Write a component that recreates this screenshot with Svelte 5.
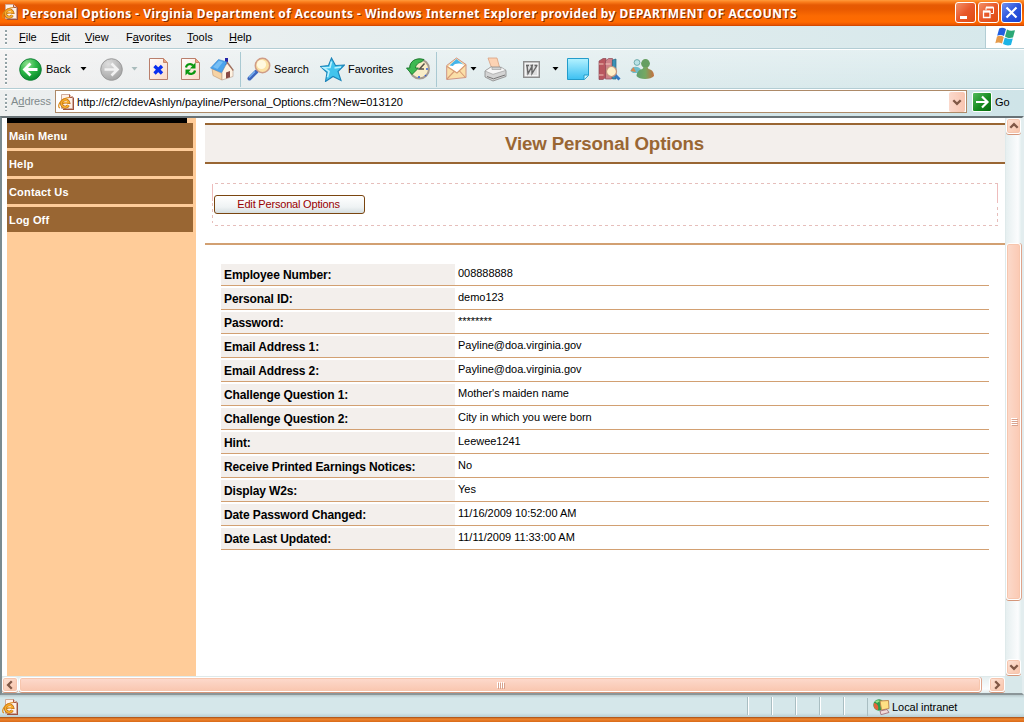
<script>
  const menus = [['', 'F', 'ile'], ['', 'E', 'dit'], ['', 'V', 'iew'], ['F', 'a', 'vorites'], ['', 'T', 'ools'], ['', 'H', 'elp']];
  const nav = ['Main Menu', 'Help', 'Contact Us', 'Log Off'];
  const rows = [
    ['Employee Number:', '008888888'],
    ['Personal ID:', 'demo123'],
    ['Password:', '********'],
    ['Email Address 1:', 'Payline@doa.virginia.gov'],
    ['Email Address 2:', 'Payline@doa.virginia.gov'],
    ['Challenge Question 1:', "Mother's maiden name"],
    ['Challenge Question 2:', 'City in which you were born'],
    ['Hint:', 'Leewee1241'],
    ['Receive Printed Earnings Notices:', 'No'],
    ['Display W2s:', 'Yes'],
    ['Date Password Changed:', '11/16/2009 10:52:00 AM'],
    ['Date Last Updated:', '11/11/2009 11:33:00 AM']
  ];
</script>

{#snippet page()}
  <svg width="16" height="16" viewBox="0 0 16 16">
    <path d="M5 2h9l2 2v12H5z" fill="#a0523f" />
    <path d="M3.500.5h8l3 3v11h-11z" fill="#fff1e8" stroke="#d0aa9a" />
    <path d="M11.500.5v3h3" fill="#f0c7b2" stroke="#a65a48" />
    <path d="M10.400 11.200A3.700 3.700 0 1 1 10.700 8.500H5" fill="none" stroke="#a85c0c" stroke-width="2.900" />
    <path d="M10.400 11.200A3.700 3.700 0 1 1 10.700 8.500H5" fill="none" stroke="#f7ab2c" stroke-width="1.900" />
    <path d="M6.300 7.600h2.600M6.300 10h3" stroke="#fff1e8" stroke-width=".8" />
    <path d="M2 14C-1.500 13 2 4 11.500 3.500" fill="none" stroke="#dc8b18" stroke-width="1.200" />
  </svg>
{/snippet}

{#snippet arrow(color)}
  <svg width="7" height="4" viewBox="0 0 7 4"><path d="M.5 0h6L3.500 3.500z" fill={color} /></svg>
{/snippet}

{#snippet chevron(turn)}
  <svg width="10" height="10" viewBox="0 0 10 10"><path d="M1.300 3.200 5 6.900l3.700-3.700" fill="none" stroke="#805846" stroke-width="2.300" transform="rotate({turn} 5 5)" /></svg>
{/snippet}

<div class="window">
  <header class="title">
    {@render page()}
    <span class="caption">Personal Options - Virginia Department of Accounts - Windows Internet Explorer provided by DEPARTMENT OF ACCOUNTS</span>
    <div class="wbtns">
      <span class="wbtn"><svg width="19" height="19" viewBox="0 0 19 19"><path d="M4 13h7v3H4z" fill="#fff" /></svg></span>
      <span class="wbtn"><svg width="19" height="19" viewBox="0 0 19 19"><path d="M7 7V4.500h7.500v6H12" fill="none" stroke="#fff" /><path d="M7 4.500h7.500M4 8.500h7" stroke="#fff" stroke-width="2" /><path d="M4.500 8.500h6.500v6H4.500z" fill="none" stroke="#fff" stroke-width="1.300" /></svg></span>
      <span class="wbtn blue"><svg width="19" height="19" viewBox="0 0 19 19"><path d="m4.500 4.500 10 10m0-10-10 10" stroke="#fff" stroke-width="2.200" /></svg></span>
    </div>
  </header>

  <nav class="menubar">
    <i class="grip"></i>
    {#each menus as m}<span>{m[0]}<u>{m[1]}</u>{m[2]}</span>{/each}
    <div class="flag">
      <svg width="21" height="19" viewBox="0 0 21 19">
        <path d="M4.200 1.500C6.500.2 8.500.5 11 2L9 9C6.800 7.700 4.500 7.500 2.200 8.700z" fill="#1f5fe0" />
        <path d="M12 2.500c2.500 1.400 4.700 1.400 8 .7L18 10.500c-3 .9-5.300.600-8-1z" fill="#2aa876" />
        <path d="M2 9.500c2.200-1.100 4.600-1 6.800.4L7 16.500C4.700 15.200 2.500 15 .3 16.200z" fill="#e59a4a" />
        <path d="M9.800 10.400c2.500 1.500 5 1.800 8 1L16 18c-3 .8-5.400.500-8-1z" fill="#1cb4e6" />
      </svg>
    </div>
  </nav>

  <div class="toolbar">
    <i class="grip"></i>
    <svg width="23" height="23" viewBox="0 0 23 23">
      <defs>
        <radialGradient id="gback" cx=".35" cy=".25" r=".8"><stop offset="0" stop-color="#8fe08f" /><stop offset=".5" stop-color="#2db848" /><stop offset="1" stop-color="#06872a" /></radialGradient>
        <radialGradient id="gfwd" cx=".35" cy=".25" r=".8"><stop offset="0" stop-color="#dedede" /><stop offset="1" stop-color="#a2a2a2" /></radialGradient>
      </defs>
      <circle cx="11.500" cy="11.500" r="10.800" fill="url(#gback)" stroke="#16803a" />
      <path d="M18.500 11.500H6M11.500 5.500l-6 6 6 6" fill="none" stroke="#fff" stroke-width="2.800" />
    </svg>
    <span>Back</span>
    {@render arrow('#000')}
    <svg width="23" height="23" viewBox="0 0 23 23">
      <circle cx="11.500" cy="11.500" r="10.800" fill="url(#gfwd)" stroke="#9b9b9b" />
      <path d="M4.500 11.500H17M11.500 5.500l6 6-6 6" fill="none" stroke="#f2f2f2" stroke-width="2.600" />
    </svg>
    {@render arrow('#a9bcbc')}
    <svg width="20" height="24" viewBox="0 0 20 24">
      <defs><linearGradient id="gpage" x2="1" y2="1"><stop offset="0" stop-color="#fff" /><stop offset="1" stop-color="#fbd9c5" /></linearGradient></defs>
      <path d="M.5 1.500h14l4 4v17H.5z" fill="url(#gpage)" stroke="#b97f6c" /><path d="M14.500 1.500v4h4" fill="#eaa380" stroke="#c98568" />
      <path d="m5.500 9 7.500 7.500m0-7.500-7.500 7.500" stroke="#0a30f0" stroke-width="3.300" />
    </svg>
    <svg width="20" height="24" viewBox="0 0 20 24">
      <path d="M.5 1.500h14l4 4v17H.5z" fill="url(#gpage)" stroke="#b97f6c" /><path d="M14.500 1.500v4h4" fill="#eaa380" stroke="#c98568" />
      <path d="M5 10.500C5.500 7 10 6 12 8.500" fill="none" stroke="#0b9810" stroke-width="2.200" /><path d="M14.500 5.500v6H9z" fill="#0b9810" />
      <path d="M14 13.500c-.5 3.500-5 4.500-7 2" fill="none" stroke="#0b9810" stroke-width="2.200" /><path d="M4.500 18.500v-6H10z" fill="#0b9810" />
    </svg>
    <svg width="24" height="24" viewBox="0 0 24 24">
      <path d="M15 1h3v7h-3z" fill="#2424a8" />
      <path d="m2 11.500 10 5V23L3 18.500z" fill="#f6d3a4" stroke="#c59d78" stroke-width=".7" />
      <path d="m12 15 5-9 6 7v6.500L12 23z" fill="#fff3e2" stroke="#bda494" stroke-width=".7" />
      <path d="m16 15.500 4-1.500v6.200l-4 1.400z" fill="#8a4b45" />
      <path d="M.5 11 8.500 2.500 17 5l-5.500 10.500z" fill="#4ba3ec" stroke="#3a86cc" stroke-width=".6" />
      <path d="m3 10 6-6.300 4 1.200-5.500 7z" fill="#8acbf8" opacity=".7" /><path d="m17 5 6.300 8.500" stroke="#a0705f" stroke-width="1.300" />
    </svg>
    <i class="sep"></i>
    <svg width="24" height="24" viewBox="0 0 24 24">
      <path d="m2.500 21.500 7-7" stroke="#3d66bd" stroke-width="4" stroke-linecap="round" /><path d="m2 20.500 6-6" stroke="#77b1f1" stroke-width="1.500" />
      <circle cx="15.500" cy="8.500" r="7.200" fill="#fbe1a4" stroke="#cf9c86" stroke-width="1.500" /><circle cx="14.500" cy="7.500" r="4.600" fill="#fff9e0" />
    </svg>
    <span>Search</span>
    <svg width="25" height="25" viewBox="0 0 25 25">
      <path d="m11.500 1 4 7.500 9-.5-6.500 6.500 3 9-8-4-7.500 5 1.500-9-6.500-6 8-1z" fill="#42c4ed" stroke="#1b83b8" stroke-width="1.100" />
      <path d="M11.500 4.500 10 10.500l-6.500.200L9 14.300l-1.500 6M21 10 14.500 11" stroke="#b8f1ff" stroke-width="1.600" fill="none" />
    </svg>
    <span>Favorites</span>
    <svg width="24" height="24" viewBox="0 0 24 24">
      <circle cx="13.500" cy="12" r="9.500" fill="#f9edc8" stroke="#a69b90" stroke-width="2" />
      <path d="m18.500 6.500-5 5.500h4.500" fill="none" stroke="#58534b" stroke-width="1.500" /><path d="M20 12h2M13 19v2m6-3 1 1" stroke="#2f60dd" stroke-width="1.600" />
      <path d="M18 2.500C9 0 3.500 5 3.800 11H.5l5.500 6.500L12.500 11H9.500c0-3 3-5.500 6-6z" fill="#3db951" stroke="#16762b" stroke-width=".9" />
    </svg>
    <i class="sep"></i>
    <svg width="21" height="24" viewBox="0 0 21 24">
      <path d="M.7 8.500 10.500 1l9.500 6.500v13L.7 22.500z" fill="#fbdfa8" stroke="#cf9484" />
      <path d="m2.500 9.500 8-7.500 8 6.500-7.500 7z" fill="#fff" /><path d="M3.500 8.500 10.500 2l7.500 6c-4-2-9-2-11 1z" fill="#45b4ea" />
      <path d="M1 9.500 11 16l9-8.500M1 22l7.500-8m11 6.500L13.500 14" fill="none" stroke="#d79b75" stroke-width="1.100" />
    </svg>
    {@render arrow('#000')}
    <svg width="24" height="25" viewBox="0 0 24 25">
      <path d="M4 1h9l3 11H8z" fill="#fdd3b4" stroke="#d8a182" stroke-width=".8" />
      <path d="m1 14 6-4h9l6 3.500v6L9 24l-8-4z" fill="#d4d4d4" stroke="#888" stroke-width=".8" />
      <path d="m1 14 8 3.300 13-4L17 10v2.500H8V10H7z" fill="#f7f7f7" stroke="#999" stroke-width=".6" />
      <path d="m3 19.500 6.500 2.300L21 18" fill="none" stroke="#777" />
    </svg>
    <svg width="17" height="17" viewBox="0 0 17 17">
      <path d="M.7.7h15.600v15.600H.7z" fill="#f4f4f4" stroke="#8d8d8d" stroke-width="1.400" /><path d="M3 3h11v11H3z" fill="#dedede" />
      <path d="m4 4.500 1 8 4-7v7l5-8M3 4.500h3m1.500 0H10m1.500 0h3" fill="none" stroke="#666" stroke-width="1.400" />
    </svg>
    {@render arrow('#000')}
    <svg width="22" height="22" viewBox="0 0 22 22">
      <defs><linearGradient id="gnote" x2="0" y2="1"><stop offset="0" stop-color="#b4f2ff" /><stop offset="1" stop-color="#3cc0f2" /></linearGradient></defs>
      <path d="M.5.5h21V17.500l-4 4H.5z" fill="url(#gnote)" stroke="#239ccb" /><path d="M17 21.500V17h4.500" fill="#d2f7ff" stroke="#239ccb" />
    </svg>
    <svg width="23" height="23" viewBox="0 0 23 23">
      <path d="m1 3 4-2.500h3V19l-3 2.500H1z" fill="#b9575f" stroke="#8c4958" stroke-width=".7" /><path d="m7.500 3 3-2.500h4L13.500 21h-6z" fill="#cf838a" stroke="#8c4958" stroke-width=".7" />
      <path d="M14.500 2 18 1v20h-3.500z" fill="#3a91b8" stroke="#28667f" stroke-width=".7" /><path d="M1 6h4.500m2 0h5M1 17h4.500" stroke="#f2c7ba" />
      <path d="m17 17 4.500 4.500" stroke="#3478c2" stroke-width="3" /><circle cx="13.500" cy="13.500" r="5" fill="#fff0c8" stroke="#c6957e" stroke-width="1.200" />
    </svg>
    <svg width="24" height="22" viewBox="0 0 24 22">
      <defs><linearGradient id="gman"><stop offset="0" stop-color="#5f9f6e" /><stop offset=".5" stop-color="#75a862" /><stop offset="1" stop-color="#c66f3f" /></linearGradient></defs>
      <circle cx="7" cy="4.500" r="2.900" fill="#b9e2e6" stroke="#5c9d9d" stroke-width=".8" /><path d="M.5 13C1 7.500 9 7.500 11 12l-2 3H3z" fill="#6ebdca" /><path d="m.5 13 3-4 2.500 5z" fill="#d98850" />
      <circle cx="15.500" cy="5.500" r="4.400" fill="#669f62" /><path d="M6.500 18C7 13 10 11.500 12.500 11l1-2h4l1 2c3 .5 5.500 2.500 5.500 7-3 4-15 4-17.500 0z" fill="url(#gman)" />
    </svg>
  </div>

  <div class="address">
    <i class="grip"></i>
    <span class="alabel">A<u>d</u>dress</span>
    <div class="field">
      {@render page()}
      <span class="url">http://cf2/cfdevAshlyn/payline/Personal_Options.cfm?New=013120</span>
      <span class="drop">{@render chevron(0)}</span>
    </div>
    <span class="go"><svg width="18" height="18" viewBox="0 0 18 18"><path d="M3 9h12M9 3.500 14.500 9 9 14.500" fill="none" stroke="#fff" stroke-width="2.200" /></svg></span>
    <span class="golabel">Go</span>
  </div>

  <div class="view">
    <aside>
      <div class="cap"></div>
      {#each nav as n}<a href="#top">{n}</a>{/each}
    </aside>
    <main>
      <h1>View Personal Options</h1>
      <div class="actions"><button>Edit Personal Options</button></div>
      <div class="rule"></div>
      <dl>
        {#each rows as r}
          <div class="row"><dt>{r[0]}</dt><dd>{r[1]}</dd></div>
        {/each}
      </dl>
    </main>
    <div class="vscroll">
      <span class="sbtn">{@render chevron(180)}</span>
      <span class="vthumb"><i></i><i></i><i></i><i></i></span>
      <span class="sbtn end">{@render chevron(0)}</span>
    </div>
    <div class="hscroll">
      <span class="sbtn">{@render chevron(90)}</span>
      <span class="hthumb"><i></i><i></i><i></i><i></i></span>
      <span class="sbtn end">{@render chevron(-90)}</span>
    </div>
  </div>

  <footer>
    <span class="sicon">{@render page()}</span>
    <i class="cell"></i><i class="cell"></i><i class="cell"></i><i class="cell"></i><i class="cell"></i>
    <span class="zone">
      <svg width="17" height="16" viewBox="0 0 17 16">
        <circle cx="6" cy="6" r="5.700" fill="#2c9a4a" /><path d="M1 4c3 0 5 3 4 7-3 0-5-3-4-7z" fill="#e2633a" /><path d="M2 2.500C4 1 6 1 7 2L4 4z" fill="#9ae28c" />
        <path d="m7 2 8.500-.5.500 8-7.500 1.500z" fill="#ffe083" stroke="#c08a50" /><path d="m7 12 7-1.500 2 3-8 2.200z" fill="#f2dada" stroke="#9a6370" stroke-width=".8" />
      </svg>
      Local intranet
    </span>
  </footer>
</div>

<style>
  :global(body) { margin: 0; }
  .window { width: 1024px; height: 722px; overflow: hidden; display: flex; flex-direction: column; background: #d5e7ea; font: 11px/13px "Liberation Sans", Arial, sans-serif; color: #000; box-sizing: border-box; }
  .window :global(*) { box-sizing: border-box; }
  svg { display: block; flex: none; }
  u { text-decoration: underline; text-underline-offset: 1px; text-decoration-skip-ink: none; }
  .title { height: 26px; flex: none; display: flex; align-items: center; padding: 0 2px; background: linear-gradient(#ff9b3c 0, #fb7e1c 2px, #e65a04 5px, #e85900 9px, #fb6a02 16px, #ff6a00 22px, #e85300 25px, #c04000 26px); }
  .caption { margin-left: 4px; padding-top: 1px; flex: 1; white-space: nowrap; color: #fff; font: bold 12px/16px "Noto Sans", sans-serif; letter-spacing: .46px; text-shadow: 1px 1px 0 #8a2c08; }
  .title > svg { margin-top: -2px; }
  .wbtns { display: flex; gap: 2px; margin-top: -1px; }
  .wbtn { width: 21px; height: 21px; border: 1px solid #fff; border-radius: 3px; background: linear-gradient(135deg, #f39168, #e8582a 50%, #e04c10); }
  .blue { background: linear-gradient(135deg, #7592ee, #2c55dd 50%, #1b43cf); }
  .menubar { height: 24px; flex: none; display: grid; grid-template-columns: 14px 32px 34px 41px 61px 42px 1fr 39px; padding-left: 5px; background: linear-gradient(90deg, #f3f2f2, #e6eeef 35%, #d6e8eb); border-bottom: 1px solid #fff; box-shadow: inset 0 -1px #b3cdd4; line-height: 22px; }
  .flag { background: #fff; border-left: 1px solid #b3cdd4; padding: 1px 0 0 9px; height: 22px; }
  .grip { width: 2px; background: repeating-linear-gradient(#93a2a6 0 2px, #fff 2px 3px, transparent 3px 4px); }
  .menubar .grip { height: 15px; margin-top: 4px; }
  .toolbar { height: 40px; flex: none; display: grid; align-items: center; padding: 0 0 1px 5px; grid-template-columns: 14px 27px 34px 20px 31px 18px 32px 29px 30px 7px 27px 46px 28px 58px 30px 10px 24px 14px 39px 29px 15px 31px 32px 24px; background: linear-gradient(#ffffff50, #ffffff00), linear-gradient(90deg, #f1efef, #e3edee 35%, #d5e8eb); border-bottom: 1px solid #fff; box-shadow: inset 0 -1px #b3cdd4; }
  .toolbar span { padding-top: 1px; }
  .toolbar .grip { height: 31px; }
  .sep { width: 1px; height: 35px; background: #a9c9d2; }
  .address { height: 26px; flex: none; display: flex; align-items: flex-start; padding-left: 5px; background: linear-gradient(90deg, #edefef, #dce9eb 35%, #cfe4e8); }
  .address .grip { height: 17px; margin-top: 4px; }
  .alabel { width: 49px; margin-left: -1px; padding: 5px 0 0 5px; color: #808a8c; letter-spacing: -.05px; }
  .field { width: 912px; height: 23px; border: 1px solid #ad8a68; background: #fff; display: flex; align-items: center; padding: 0 1px 0 2px; }
  .url { flex: 1; margin-left: 3px; padding-top: 1px; letter-spacing: .015px; }
  .drop { width: 16px; height: 20px; border-radius: 2px; background: linear-gradient(90deg, #fbd9cc, #f8c5b0); display: flex; align-items: center; justify-content: center; }
  .go { margin: 2px 0 0 5px; width: 20px; height: 20px; border: 1px solid #fff; border-radius: 2px; background: linear-gradient(135deg, #54ba5c, #178b20 55%, #056b0c); }
  .golabel { margin: 6px 0 0 3px; }
  .view { height: 579px; flex: none; display: grid; grid-template-rows: 558px 17px; grid-template-columns: 194px 809px 17px; background: #d8e8ea; border: 2px solid #6b7477; border-top-color: #687276; border-right: 2px solid #e3edef; border-bottom: 2px solid #8b9699; border-left: 2px solid #7b8b90; }
  aside { background: linear-gradient(#fc9, #fc9) 5px 0 / 189px 100% no-repeat #fff; padding: 0 3px 0 5px; }
  .cap { width: 180px; height: 5px; background: #000; }
  aside a { display: block; height: 25px; margin-bottom: 3px; padding: 0 2px; background: #963; color: #fff; text-decoration: none; font-weight: bold; line-height: 26px; letter-spacing: .17px; }
  main { background: #fff; padding: 5px 0 0 9px; }
  h1 { margin: 0; height: 41px; border: solid #963; border-width: 2px 0; background: #f3efec; color: #963; text-align: center; font: bold 18.67px/38px "Liberation Sans", Arial, sans-serif; letter-spacing: -.13px; padding-right: 1px; }
  .actions { margin: 19px 7px 0; height: 43px; padding: 12px 2px;
    background:
      repeating-linear-gradient(90deg, #e6bebb 0 3px, transparent 3px 6px) 3px 0 / 783px 1px no-repeat,
      repeating-linear-gradient(90deg, #e6bebb 0 3px, transparent 3px 6px) 3px 42px / 783px 1px no-repeat,
      linear-gradient(#eebcbc, #eebcbc) 0 1px / 1px 17px no-repeat,
      repeating-linear-gradient(#e6bebb 0 3px, transparent 3px 6px) 0 20px / 1px 20px no-repeat,
      linear-gradient(#eebcbc, #eebcbc) 785px 0 / 1px 20px no-repeat,
      repeating-linear-gradient(#e6bebb 0 3px, transparent 3px 6px) 785px 24px / 1px 16px no-repeat; }
  button { display: block; width: 151px; height: 19px; margin: 0; padding: 0 2px 0 0; border: 1px solid #7a4510; border-radius: 3px; background: linear-gradient(#fff, #eff3f4 65%, #d5dee0); color: #900; font: 11px/15px "Liberation Sans", Arial, sans-serif; letter-spacing: -.19px; }
  .rule { height: 2px; margin: 17px 0 19px; background: #d2a072; }
  dl { margin: 0 16px; display: flex; flex-direction: column; gap: 2px; }
  .row { height: 22px; display: flex; border-bottom: 1px solid #d2a072; }
  dt { width: 234px; padding-left: 3px; background: #f3efec; font: bold 12px/22px "Liberation Sans", Arial, sans-serif; letter-spacing: -.12px; }
  dd { margin: 0; padding-left: 3px; line-height: 19px; letter-spacing: -.03px; }
  .vscroll { background: linear-gradient(90deg, #e6eff0, #fbfcfd 75%, #dfeced); border-left: 1px solid #dfeaeb; display: flex; flex-direction: column; align-items: flex-start; }
  .sbtn { width: 15px; height: 16px; flex: none; border: 1px solid #fff; border-radius: 3px; background: linear-gradient(135deg, #fde4d8, #f8c3a8); box-shadow: inset 0 0 0 1px #f5c5ae, 0 1px #d5977b; display: flex; align-items: center; justify-content: center; }
  .vthumb { margin-top: 109px; width: 15px; height: 357px; border: 1px solid #fff; border-radius: 3px; background: linear-gradient(90deg, #fbdacb, #fbc9b3); box-shadow: inset 0 0 0 1px #f7c6ae, 0 1px #d5977b, 1px 0 #dfa48b; display: flex; flex-direction: column; gap: 1px; align-items: center; justify-content: center; }
  .vthumb i { width: 6px; height: 1px; background: #fff; box-shadow: 1px 1px #d8a28d; }
  .vscroll .end { margin-top: auto; margin-bottom: 1px; }
  .hscroll { grid-column: 1 / 3; background: linear-gradient(#e6eff0, #fbfcfd 75%, #dfeced); border-top: 1px solid #dfeaeb; display: flex; }
  .hthumb { margin-left: 1px; width: 962px; height: 15px; border: 1px solid #fff; border-radius: 3px; background: linear-gradient(#fddacd, #f9c6af); box-shadow: inset 0 0 0 1px #f7c6ae, 0 1px #d5977b, 1px 0 #dfa48b; display: flex; gap: 1px; align-items: center; justify-content: center; }
  .hthumb i { width: 1px; height: 6px; background: #fff; box-shadow: 1px 1px #d8a28d; }
  .hscroll .end { margin-left: auto; }
  .hscroll .sbtn { width: 16px; height: 15px; }
  footer { flex: 1; display: flex; background: linear-gradient(#b8c9cc 0, #d5e7ea 3px, #d5e7ea 18px, #b9ced2 22px, #a34c15 22px, #ee8630 24px, #d96a18 27px); }
  .sicon { width: 747px; padding: 4px 0 0 2px; }
  .cell { width: 24px; height: 18px; margin-top: 2px; border-left: 1px solid #a9bec2; box-shadow: inset 1px 0 #fff; }
  .cell + .zone { margin: 3px 0 0; height: 18px; width: 156px; border-left: 1px solid #a9bec2; display: flex; align-items: center; gap: 2px; padding-left: 5px; letter-spacing: -.05px; }
</style>
